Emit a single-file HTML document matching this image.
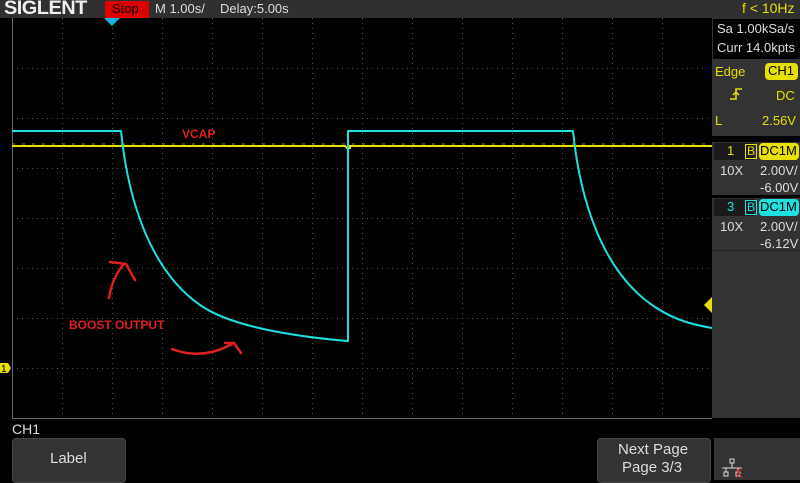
<!DOCTYPE html>
<html><head><style>
*{margin:0;padding:0;box-sizing:border-box}
body{width:800px;height:480px;background:#000;overflow:hidden;position:relative;font-family:"Liberation Sans",sans-serif}
.a{position:absolute}
.t{position:absolute;white-space:nowrap;font-size:13px}
</style></head><body>
<div class="a" style="left:0;top:0;width:800px;height:18px;background:#303030"></div>
<div class="t" style="left:4px;top:-2px;font-size:19px;font-weight:bold;color:#eee;letter-spacing:-0.5px;transform:scaleX(1.05);transform-origin:left">SIGLENT</div>
<div class="a" style="left:105px;top:1px;width:44px;height:17px;background:#d00"></div>
<div class="t" style="left:112px;top:1px;color:#000">Stop</div>
<div class="t" style="left:155px;top:1px;color:#ddd">M 1.00s/</div>
<div class="t" style="left:220px;top:1px;color:#ddd">Delay:5.00s</div>
<div class="t" style="left:742px;top:0px;color:#e8e000;font-size:14px">f &lt; 10Hz</div>

<div class="a" style="left:712px;top:18px;width:88px;height:400px;background:#333"></div>
<div class="a" style="left:713px;top:19px;width:87px;height:40px;background:#000"></div>
<div class="t" style="left:717px;top:21px;color:#ddd">Sa 1.00kSa/s</div>
<div class="t" style="left:717px;top:40px;color:#ddd">Curr 14.0kpts</div>
<div class="t" style="left:715px;top:64px;color:#e8e000">Edge</div>
<div class="a" style="left:765px;top:63px;width:33px;height:17px;background:#e8e000;border-radius:4px"></div>
<div class="t" style="left:768px;top:63px;color:#000">CH1</div>
<svg class="a" style="left:728px;top:86px" width="16" height="16"><path d="M2 13H8V3H14M5 9L8 6L11 9" stroke="#e8e000" stroke-width="1.5" fill="none"/></svg>
<div class="t" style="left:776px;top:88px;color:#e8e000">DC</div>
<div class="t" style="left:715px;top:113px;color:#e8e000">L</div>
<div class="t" style="left:762px;top:113px;color:#e8e000">2.56V</div>
<div class="a" style="left:712px;top:136px;width:88px;height:6px;background:#000"></div>
<div class="a" style="left:714px;top:143px;width:40px;height:17px;background:#1a1a1a"></div>
<div class="t" style="left:727px;top:143px;color:#e8e000">1</div>
<div class="t" style="left:746px;top:145px;color:#e8e000;outline:1px solid #e8e000;line-height:13px;padding:0 1px;font-size:12px">B</div>
<div class="a" style="left:759px;top:143px;width:40px;height:17px;background:#e8e000;border-radius:4px"></div>
<div class="t" style="left:760px;top:143px;color:#000">DC1M</div>
<div class="t" style="left:720px;top:163px;color:#ddd">10X</div>
<div class="t" style="left:760px;top:163px;color:#ddd">2.00V/</div>
<div class="t" style="left:760px;top:180px;color:#ddd">-6.00V</div>
<div class="a" style="left:712px;top:195px;width:88px;height:3px;background:#000"></div>
<div class="a" style="left:714px;top:199px;width:40px;height:17px;background:#1a1a1a"></div>
<div class="t" style="left:727px;top:199px;color:#1ee0e0">3</div>
<div class="t" style="left:746px;top:201px;color:#1ee0e0;outline:1px solid #1ee0e0;line-height:13px;padding:0 1px;font-size:12px">B</div>
<div class="a" style="left:759px;top:199px;width:40px;height:17px;background:#1ee0e0;border-radius:4px"></div>
<div class="t" style="left:760px;top:199px;color:#000">DC1M</div>
<div class="t" style="left:720px;top:219px;color:#ddd">10X</div>
<div class="t" style="left:760px;top:219px;color:#ddd">2.00V/</div>
<div class="t" style="left:760px;top:236px;color:#ddd">-6.12V</div>
<div class="a" style="left:712px;top:250px;width:88px;height:1px;background:#222"></div>

<svg class="a" style="left:0;top:0" width="800" height="480">
<g stroke="#555" stroke-width="1" stroke-dasharray="1,4" fill="none">
<path d="M62.5 18V418M112.5 18V418M162.5 18V418M212.5 18V418M262.5 18V418M312.5 18V418M362.5 18V418M412.5 18V418M462.5 18V418M512.5 18V418M562.5 18V418M612.5 18V418M662.5 18V418"/>
<path d="M12 68.5H712M12 118.5H712M12 168.5H712M12 218.5H712M12 268.5H712M12 318.5H712M12 368.5H712"/>
</g>
<path d="M12.5 18V418.5H712" stroke="#666" fill="none"/>
<polygon points="104,18 120,18 112,26" fill="#1ab0e0"/>
<polygon points="704,305 712,297 712,313" fill="#e8e000"/>
<polygon points="0,363 8,363 11,368 8,373 0,373" fill="#e8e000"/>
<text x="1" y="372" font-size="10" fill="#000" font-family="Liberation Sans">1</text>
<path d="M12 146H345L347 148H350V146H712" stroke="#e8e000" stroke-width="2" fill="none"/>
<path d="M12 144H712" stroke="#8a8a00" stroke-width="1" stroke-dasharray="3,7" fill="none"/>
<g stroke="#1ee0e0" stroke-width="2" fill="none" stroke-linejoin="round">
<path d="M12 131H121C128 200 150 270 200 305C230 326 290 336 347 341H348V131H573C580 200 602 270 652 305C675 321 695 325 712 328"/>
</g>
<text x="182" y="138" font-size="12" font-weight="bold" fill="#e02020" font-family="Liberation Sans">VCAP</text>
<text x="69" y="329" font-size="12" font-weight="bold" fill="#e02020" font-family="Liberation Sans">BOOST OUTPUT</text>
<g stroke="#e02020" stroke-width="2.5" fill="none" stroke-linecap="round">
<path d="M109 298C111 285 115 275 123 265M110 262L126 264L135 280"/>
<path d="M172 349C190 356 210 356 232 344M225 343L234 343L241 353"/>
</g>
</svg>

<div class="t" style="left:12px;top:421px;color:#ddd;font-size:14px">CH1</div>
<div class="a" style="left:12px;top:438px;width:114px;height:45px;background:#333;border-radius:4px;border:1px solid #444"></div>
<div class="t" style="left:50px;top:450px;color:#ddd;font-size:15px">Label</div>
<div class="a" style="left:597px;top:438px;width:114px;height:45px;background:#333;border-radius:4px;border:1px solid #444"></div>
<div class="t" style="left:618px;top:441px;color:#ddd;font-size:15px">Next Page</div>
<div class="t" style="left:622px;top:459px;color:#ddd;font-size:15px">Page 3/3</div>
<div class="a" style="left:714px;top:438px;width:86px;height:42px;background:#333"></div>
<svg class="a" style="left:718px;top:458px" width="30" height="22"><g stroke="#ddd" fill="none"><rect x="12" y="1" width="4" height="4"/><path d="M14 5V10M4 10H24M8 10V14M20 10V14"/><rect x="6" y="14" width="4" height="4"/><rect x="18" y="14" width="4" height="4"/></g><path d="M18 10L24 20M24 10L18 20" stroke="#e02020"/></svg>
</body></html>
